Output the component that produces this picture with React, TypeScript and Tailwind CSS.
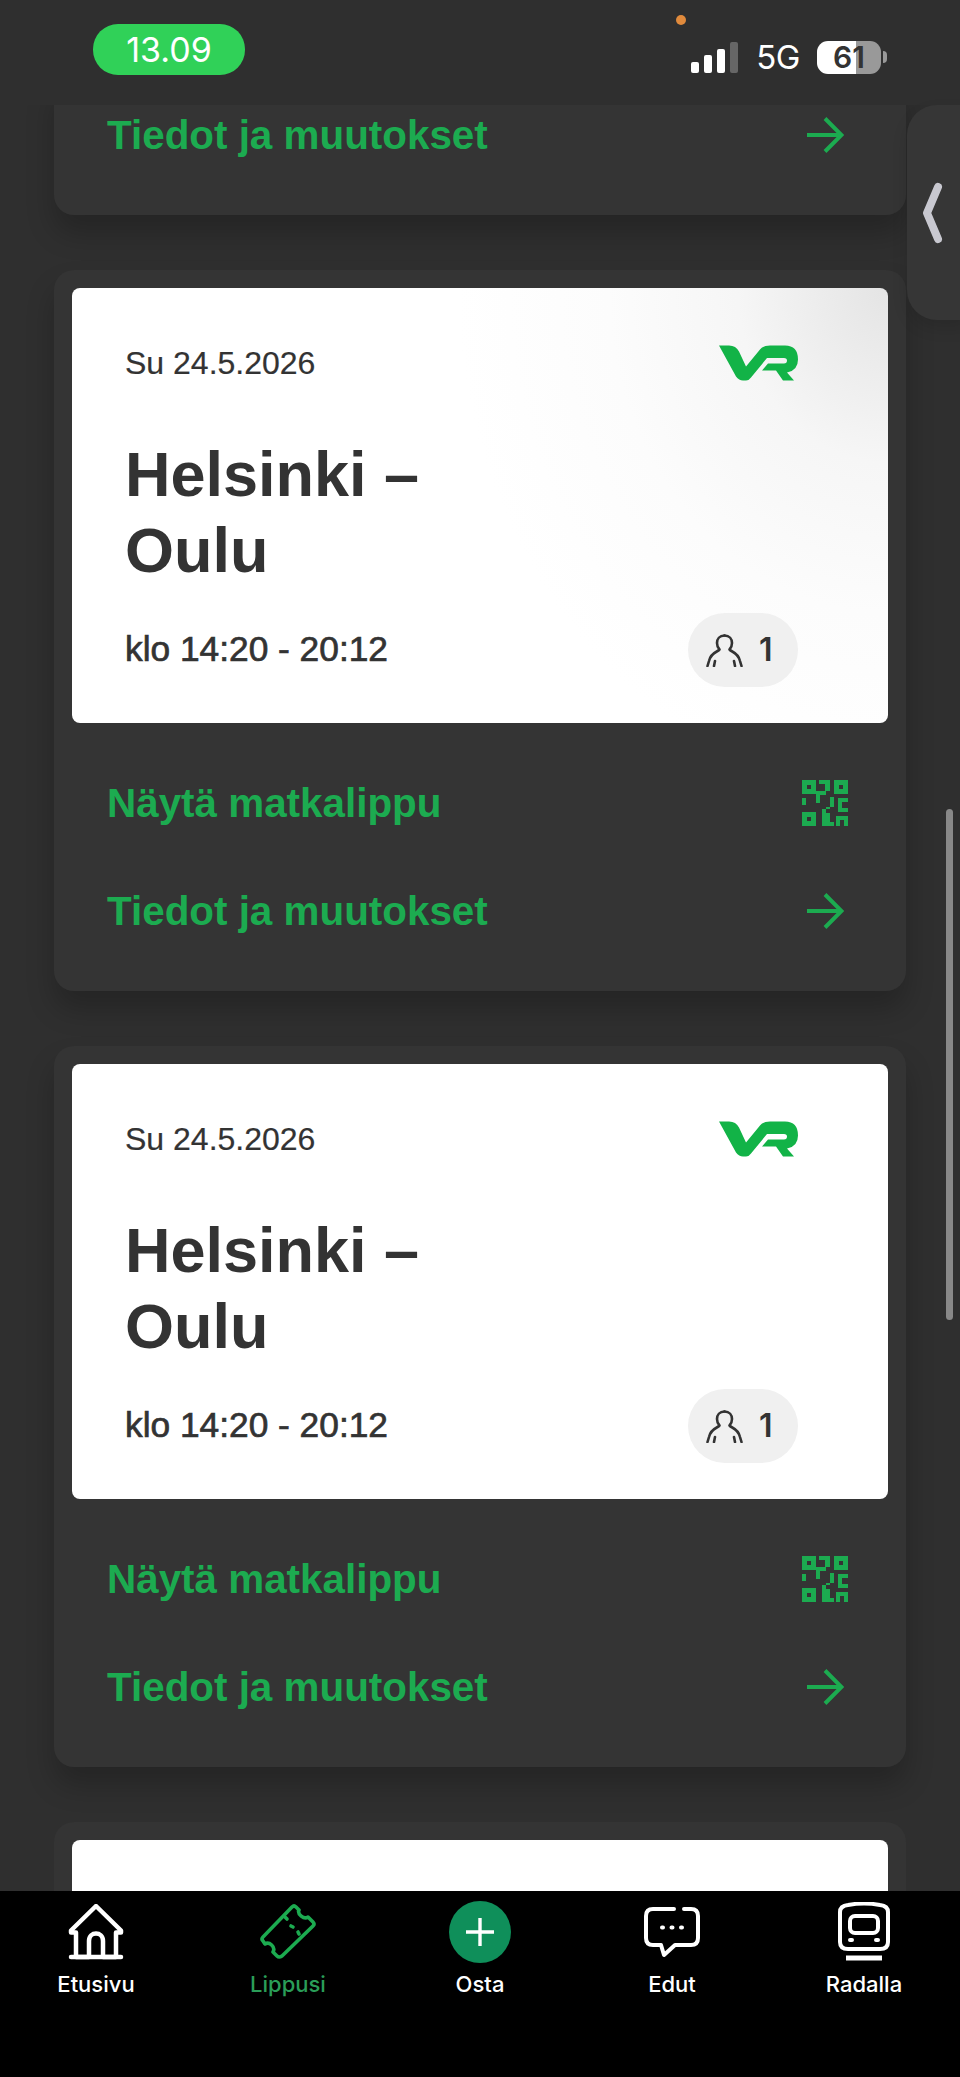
import React from "react";

const GREEN = "#1cab50";

const ArrowIcon = () => (
  <svg width="38" height="36" viewBox="0 0 38 36" fill="none" stroke="currentColor" strokeWidth="4">
    <path d="M1 18H35" />
    <path d="M19 1.5L35.5 18L19 34.5" />
  </svg>
);

const QrIcon = () => (
  <svg width="46" height="46" viewBox="0 0 46 46" fill="currentColor">
    <path fillRule="evenodd" d="M0 0H14V14H0ZM5 5V9H9V5Z" />
    <path fillRule="evenodd" d="M32 0H46V14H32ZM37 5V9H41V5Z" />
    <path fillRule="evenodd" d="M0 32H14V46H0ZM5 37V41H9V37Z" />
    <path d="M17 0H28V11H24V15H18V23H14V11H23V4H17Z" />
    <path d="M0 18H4V25H0Z" />
    <path d="M28 17H32V27H24V33H28V42H32V46H20V29H28Z" />
    <path d="M36 18H46V22H40V28H46V32H36Z" />
    <path d="M34 36H46V46H42V40H38V46H34Z" />
  </svg>
);

const VrLogo = () => (
  <svg className="-mt-[1px]" width="79" height="36" viewBox="0 0 79 35" fill="#12b347">
    <path d="M0 0H10Q17 0 20 6L27 21L41 4Q44 0 51 0H66Q79 0 79 14Q79 25 68 27L75 35H64L57 25H43L49 18H65Q68 18 68 15Q68 12.5 65 12.5H48L32 32Q30 35 27 35H24Q20 35 17 31Z" />
  </svg>
);

const PersonIcon = () => (
  <svg width="37" height="33" viewBox="0 0 37 33" fill="none" stroke="#333" strokeWidth="2.6" strokeLinecap="round" strokeLinejoin="round">
    <path d="M18.5 1.5C13.5 1.5 11 5 11 9C11 12 12 14 13.5 15.5C12 18 5 18 3 27L1.5 32" />
    <path d="M18.5 1.5C23.5 1.5 26 5 26 9C26 12 25 14 23.5 15.5C25 18 32 18 34 27L35.5 32" />
    <path d="M8 32L9 27M29 32L28 27" />
  </svg>
);

const ActionRow = ({ label, icon, iconClass }: { label: string; icon: React.ReactNode; iconClass: string }) => (
  <div className="flex h-[108px] items-center justify-between pl-[35px] text-[#1cab50]">
    <span className="font-['Liberation_Sans',sans-serif] text-[40.4px] font-bold">{label}</span>
    <span className={iconClass}>{icon}</span>
  </div>
);

const TicketCard = ({ gradient }: { gradient?: boolean }) => (
  <div className="mx-[54px] w-[852px] rounded-[20px] bg-[#343434] px-[18px] pt-[18px] pb-[26px] shadow-[0_18px_28px_rgba(0,0,0,0.22)]">
    <div
      className={`flex h-[435px] flex-col rounded-lg pt-[58px] pr-[90px] pb-[36px] pl-[53px] font-['Liberation_Sans',sans-serif] text-[#333333] ${
        gradient
          ? "bg-[radial-gradient(ellipse_430px_500px_at_100%_0%,#e4e4e4_0%,#f6f6f6_35%,#fcfcfc_65%,#ffffff_100%)]"
          : "bg-white"
      }`}
    >
      <div className="flex h-[40px] items-start justify-between">
        <span className="-mt-[3px] text-[32px] leading-[40px] [-webkit-text-stroke:0.2px_#333333]">Su 24.5.2026</span>
        <VrLogo />
      </div>
      <h2 className="mt-[50px] text-[63px] leading-[76px] font-bold">
        Helsinki –
        <br />
        Oulu
      </h2>
      <div className="mt-[25px] flex h-[74px] items-center justify-between">
        <span className="-mt-[2px] text-[35.3px] [-webkit-text-stroke:0.7px_#333333]">klo 14:20 - 20:12</span>
        <div className="flex h-[74px] w-[110px] items-center gap-[16px] rounded-[37px] bg-[#f0f0f0] pl-[18px]">
          <PersonIcon />
          <span className="font-['Inter',sans-serif] text-[32px] font-semibold">1</span>
        </div>
      </div>
    </div>
    <div className="pt-[26px]">
      <ActionRow label="Näytä matkalippu" icon={<QrIcon />} iconClass="pr-[40px]" />
      <ActionRow label="Tiedot ja muutokset" icon={<ArrowIcon />} iconClass="pr-[44px]" />
    </div>
  </div>
);

const navItems = [
  {
    label: "Etusivu",
    icon: (
      <svg width="56" height="56" viewBox="0 0 56 56" fill="none" stroke="white" strokeWidth="4.5" strokeLinejoin="round" strokeLinecap="round">
        <path d="M28 2L3 26.5V28.5H8V53H21V37C21 27 35 27 35 37V53H48V28.5H53V26.5Z" />
        <path d="M3 53H53" />
      </svg>
    ),
  },
  {
    label: "Lippusi",
    active: true,
    icon: (
      <svg width="56" height="56" viewBox="0 0 56 56" fill="none" stroke={GREEN} strokeWidth="3.6" strokeLinejoin="round" strokeLinecap="round">
        <path d="M32 3Q34 1 36 3L39 6C37 10 44 16 48 13L53 18Q55 20 53 22L22 52Q19 54 17 52L13 48C16 43 9 37 5 40L3 37Q1 35 3 33Z" />
        <path d="M25 13L27 15M31 22L33 23M38 28L39 30" />
      </svg>
    ),
  },
  {
    label: "Osta",
    icon: (
      <div className="flex h-[62px] w-[62px] items-center justify-center rounded-full bg-[#0f8f5a]">
        <svg width="30" height="30" viewBox="0 0 30 30" stroke="white" strokeWidth="3.4">
          <path d="M15 1V29M1 15H29" />
        </svg>
      </div>
    ),
  },
  {
    label: "Edut",
    icon: (
      <svg width="56" height="52" viewBox="0 0 56 52" fill="none" stroke="white" strokeWidth="4" strokeLinecap="round" strokeLinejoin="round">
        <path d="M30 3H9Q2 3 2 10V32Q2 39 9 39H17L20 49L31 39H47Q54 39 54 32V10Q54 3 47 3H40" />
        <path d="M18 21.5H19M27.5 21.5H28.5M37 21.5H38" />
      </svg>
    ),
  },
  {
    label: "Radalla",
    icon: (
      <svg width="52" height="60" viewBox="0 0 52 60" fill="none" stroke="white" strokeWidth="4" strokeLinejoin="round" strokeLinecap="round">
        <path d="M2 10Q2 4 10 3Q26 0 42 3Q50 4 50 10V40Q50 47 42 47H10Q2 47 2 40Z" />
        <rect x="12" y="14" width="28" height="17" rx="5" />
        <path d="M12 38H14M38 38H40" />
        <path d="M8 56H44" strokeWidth="5" strokeLinecap="butt" />
      </svg>
    ),
  },
];

export default function App() {
  return (
    <div className="relative flex h-[2077px] w-[960px] flex-col overflow-hidden bg-[#2f2f2f] font-['Inter',sans-serif]">
      {/* Status bar */}
      <div className="relative z-10 flex h-[105px] items-start justify-between bg-[#2f2f2f] pr-[73px] pl-[93px] text-white">
        <div className="mt-[24px] flex h-[51px] w-[152px] items-center justify-center rounded-[25px] bg-[#30d158] text-[34px]">
          13.09
        </div>
        <span className="absolute top-[15px] left-[676px] h-[10px] w-[10px] rounded-full bg-[#e08a3c]" />
        <div className="mt-[40px] flex items-center">
          <div className="flex h-[32px] items-end gap-[5px]">
            <span className="h-[11px] w-[8px] rounded-[2px] bg-white" />
            <span className="h-[18px] w-[8px] rounded-[2px] bg-white" />
            <span className="h-[24px] w-[8px] rounded-[2px] bg-white" />
            <span className="h-[31px] w-[8px] rounded-[2px] bg-[#666666]" />
          </div>
          <span className="ml-[18px] text-[33px] leading-[34px] tracking-[-0.5px]">5G</span>
          <div className="relative ml-[17px] flex h-[33px] w-[64px] items-center justify-center rounded-[11px] bg-[linear-gradient(to_right,#ffffff_0,#ffffff_39px,#999999_39px,#999999_100%)] text-[30px] leading-[33px] font-semibold text-[#333333]">
            61
          </div>
          <span className="ml-[2px] h-[12px] w-[4px] rounded-r-full bg-[#999999]" />
        </div>
      </div>

      {/* Ticket list */}
      <main className="flex-1 overflow-hidden">
        <div className="-mt-[24px] flex flex-col gap-[55px]">
          <div className="mx-[54px] w-[852px] rounded-b-[20px] bg-[#343434] px-[18px] pb-[26px] shadow-[0_18px_28px_rgba(0,0,0,0.22)]">
            <ActionRow label="Tiedot ja muutokset" icon={<ArrowIcon />} iconClass="pr-[44px]" />
          </div>
          <TicketCard gradient />
          <TicketCard />
          {/* Next ticket, only its top edge shows above the nav */}
          <div className="mx-[54px] w-[852px] rounded-t-[20px] bg-[#343434] px-[18px] pt-[18px]">
            <div className="h-[100px] rounded-t-lg bg-white" />
          </div>
        </div>
      </main>

      {/* Bottom navigation */}
      <nav className="relative z-10 flex h-[186px] bg-black pt-[10px]">
        {navItems.map((item) => (
          <div key={item.label} className="flex flex-1 flex-col items-center">
            <div className="flex h-[62px] items-center justify-center">{item.icon}</div>
            <span className={`mt-[5px] text-[22px] font-medium ${item.active ? "text-[#2a9d58]" : "text-white"}`}>
              {item.label}
            </span>
          </div>
        ))}
      </nav>

      {/* Side tab */}
      <div className="absolute top-[105px] left-[907px] z-20 flex h-[215px] w-[60px] items-center rounded-l-[30px] bg-[#363636] pl-[15px] shadow-[0_8px_16px_rgba(0,0,0,0.12)]">
        <svg width="24" height="62" viewBox="0 0 24 62" fill="none" stroke="#c8c8d0" strokeWidth="8" strokeLinecap="round" strokeLinejoin="round">
          <path d="M16 5L5 31L16 57" />
        </svg>
      </div>

      {/* Scrollbar */}
      <div className="absolute top-[809px] left-[946px] z-20 h-[511px] w-[7px] rounded-full bg-[#888888]" />
    </div>
  );
}
